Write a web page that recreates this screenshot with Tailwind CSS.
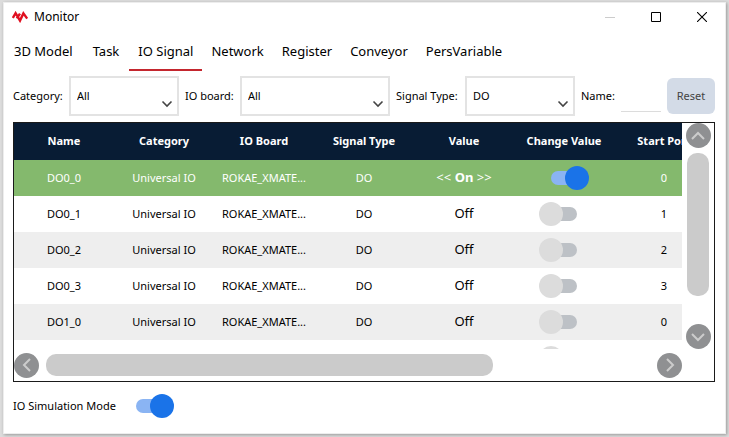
<!DOCTYPE html>
<html lang="en">
<head>
    <meta charset="UTF-8">
    <meta name="viewport" content="width=device-width, initial-scale=1.0">
    <title>Monitor</title>
    <script src="https://cdn.jsdelivr.net/npm/@tailwindcss/browser@4"></script>
</head>
<body class="min-h-screen flex flex-col bg-[#dcdcdc] pt-[3px] pr-1 pb-1 pl-1 font-['Noto_Sans','Open_Sans',sans-serif] text-[11px] text-black">
<div class="grow flex flex-col bg-white pl-[9px] pr-[10px] outline-1 outline-[#ededed] shadow-[1px_1px_3px_1px_rgba(0,0,0,0.3)]">

    <header class="h-7 flex items-center">
        <svg class="w-4 h-3 ml-[-1px]" viewBox="0 0 16 12" fill="none" stroke="#e01020" stroke-width="2.4">
            <path d="M.8 7 3.6 2.2 8 9.6 11.4 2.4 15.2 7.6M4.8 7.4 8 2.6"/>
        </svg>
        <h1 class="ml-[6px] text-xs">Monitor</h1>
        <div class="ml-auto flex items-center gap-9 pr-2">
            <button type="button" aria-label="Minimize">
                <svg class="size-[10px]" viewBox="0 0 10 10"><path d="M0 5h10v1H0z" fill="#ccc"/></svg>
            </button>
            <button type="button" aria-label="Maximize">
                <svg class="size-[10px]" viewBox="0 0 10 10" fill="none" stroke="#000"><path d="M.5.5h9v9h-9z"/></svg>
            </button>
            <button type="button" aria-label="Close">
                <svg class="size-[10px]" viewBox="0 0 10 10" stroke="#000" stroke-width="1.1"><path d="M0 0 10 10M10 0 0 10"/></svg>
            </button>
        </div>
    </header>

    <nav class="h-10 flex text-[13px] whitespace-nowrap">
        <a href="#" class="px-[10px] pt-[11px] ml-[-9px]">3D Model</a>
        <a href="#" class="px-[10px] pt-[11px]">Task</a>
        <a href="#" class="px-[9px] pt-[11px] border-b-2 border-[#c4262e]">IO Signal</a>
        <a href="#" class="px-[9px] pt-[11px]">Network</a>
        <a href="#" class="px-[9px] pt-[11px]">Register</a>
        <a href="#" class="px-[9px] pt-[11px]">Conveyor</a>
        <a href="#" class="px-[9px] pt-[11px]">PersVariable</a>
    </nav>

    <form class="mt-[5px] h-10 grid grid-cols-[56px_110fr_61px_150fr_75px_110fr_46px_40fr_54px] items-center whitespace-nowrap">
        <label for="category">Category:</label>
        <div class="relative">
            <select id="category" class="appearance-none block w-full h-10 border-2 border-[#e3e3e3] bg-white pl-[6px]">
                <option>All</option>
            </select>
            <svg class="pointer-events-none absolute right-[6px] bottom-2 w-3 h-2" viewBox="0 0 12 8" fill="none" stroke="#444" stroke-width="1.6"><path d="M1.5 1.5 6 6 10.5 1.5"/></svg>
        </div>
        <label for="board" class="pl-[6px]">IO board:</label>
        <div class="relative">
            <select id="board" class="appearance-none block w-full h-10 border-2 border-[#e3e3e3] bg-white pl-[6px]">
                <option>All</option>
            </select>
            <svg class="pointer-events-none absolute right-[6px] bottom-2 w-3 h-2" viewBox="0 0 12 8" fill="none" stroke="#444" stroke-width="1.6"><path d="M1.5 1.5 6 6 10.5 1.5"/></svg>
        </div>
        <label for="signal-type" class="pl-[6px]">Signal Type:</label>
        <div class="relative">
            <select id="signal-type" class="appearance-none block w-full h-10 border-2 border-[#e3e3e3] bg-white pl-[6px]">
                <option>DO</option>
            </select>
            <svg class="pointer-events-none absolute right-[6px] bottom-2 w-3 h-2" viewBox="0 0 12 8" fill="none" stroke="#444" stroke-width="1.6"><path d="M1.5 1.5 6 6 10.5 1.5"/></svg>
        </div>
        <label for="name" class="pl-[6px]">Name:</label>
        <input id="name" type="text" class="w-full h-8 border-b border-[#dcdcdc] outline-none">
        <button type="reset" class="ml-[6px] h-9 rounded-md bg-[#d3dbe7] text-[#444]">Reset</button>
    </form>

    <main class="mt-[6px] h-[260px] grid grid-cols-[minmax(0,1fr)_32px] grid-rows-[226px_32px] border border-[#1a1a1a]">
        <div class="overflow-hidden">
            <table class="table-fixed w-[700px] text-center whitespace-nowrap">
                <thead>
                <tr class="h-[37px] bg-[#081c34] text-white">
                    <th>Name</th>
                    <th>Category</th>
                    <th>IO Board</th>
                    <th>Signal Type</th>
                    <th>Value</th>
                    <th>Change Value</th>
                    <th>Start Port</th>
                </tr>
                </thead>
                <tbody id="signals"></tbody>
            </table>
        </div>

        <div class="flex flex-col items-center">
            <button type="button" aria-label="Scroll up" class="size-[25px] shrink-0 rounded-full bg-[#8f9092] grid place-items-center">
                <svg class="w-4 h-3" viewBox="0 0 16 12" fill="none" stroke="#ccc" stroke-width="2"><path d="M2 9 8 3 14 9"/></svg>
            </button>
            <div class="mt-[5px] w-[22px] h-[143px] rounded-[10px] bg-[#cbcbcb]"></div>
            <button type="button" aria-label="Scroll down" class="mt-auto size-[25px] shrink-0 rounded-full bg-[#8f9092] grid place-items-center">
                <svg class="w-4 h-3" viewBox="0 0 16 12" fill="none" stroke="#ccc" stroke-width="2"><path d="M2 3 8 9 14 3"/></svg>
            </button>
        </div>

        <div class="flex items-center">
            <button type="button" aria-label="Scroll left" class="size-[25px] shrink-0 rounded-full bg-[#8f9092] grid place-items-center">
                <svg class="w-3 h-4" viewBox="0 0 12 16" fill="none" stroke="#ccc" stroke-width="2"><path d="M9 2 3 8 9 14"/></svg>
            </button>
            <div class="grow px-[7px]">
                <div class="w-[74%] h-[22px] rounded-[10px] bg-[#cbcbcb]"></div>
            </div>
            <button type="button" aria-label="Scroll right" class="size-[25px] shrink-0 rounded-full bg-[#8f9092] grid place-items-center">
                <svg class="w-3 h-4" viewBox="0 0 12 16" fill="none" stroke="#ccc" stroke-width="2"><path d="M3 2 9 8 3 14"/></svg>
            </button>
        </div>
    </main>

    <footer class="grow flex items-center gap-5 pb-[3px]">
        <label for="simulation">IO Simulation Mode</label>
        <input id="simulation" type="checkbox" checked class="appearance-none relative block w-[26px] h-[14px] rounded-full bg-[#bdc1c6] checked:bg-[#8ab4f3] after:absolute after:-top-[5px] after:-left-3 after:size-6 after:rounded-full after:bg-[#dcdcdc] checked:after:left-[14px] checked:after:bg-[#1a73e8]">
    </footer>
</div>

<script>
    const signals = [
        { name: 'DO0_0', port: 0, on: true },
        { name: 'DO0_1', port: 1 },
        { name: 'DO0_2', port: 2 },
        { name: 'DO0_3', port: 3 },
        { name: 'DO1_0', port: 0 },
        { name: 'DO1_1', port: 1 }
    ];

    document.getElementById('signals').innerHTML = signals.map((s, i) => `
        <tr class="h-9 ${s.on ? 'bg-[#84b96d] text-white' : i % 2 ? 'bg-white' : 'bg-[#eeeeee]'}">
            <td>${s.name}</td>
            <td>Universal IO</td>
            <td>ROKAE_XMATE...</td>
            <td>DO</td>
            <td class="text-[13px]">${s.on ? '&lt;&lt; <b>On</b> &gt;&gt;' : 'Off'}</td>
            <td>
                <input type="checkbox" aria-label="Change ${s.name}" ${s.on ? 'checked' : ''} class="appearance-none relative block mx-auto w-[26px] h-[14px] rounded-full bg-[#bdc1c6] checked:bg-[#8ab4f3] after:absolute after:-top-[5px] after:-left-3 after:size-6 after:rounded-full after:bg-[#dcdcdc] checked:after:left-[14px] checked:after:bg-[#1a73e8]">
            </td>
            <td>${s.port}</td>
        </tr>`).join('');
</script>
</body>
</html>
